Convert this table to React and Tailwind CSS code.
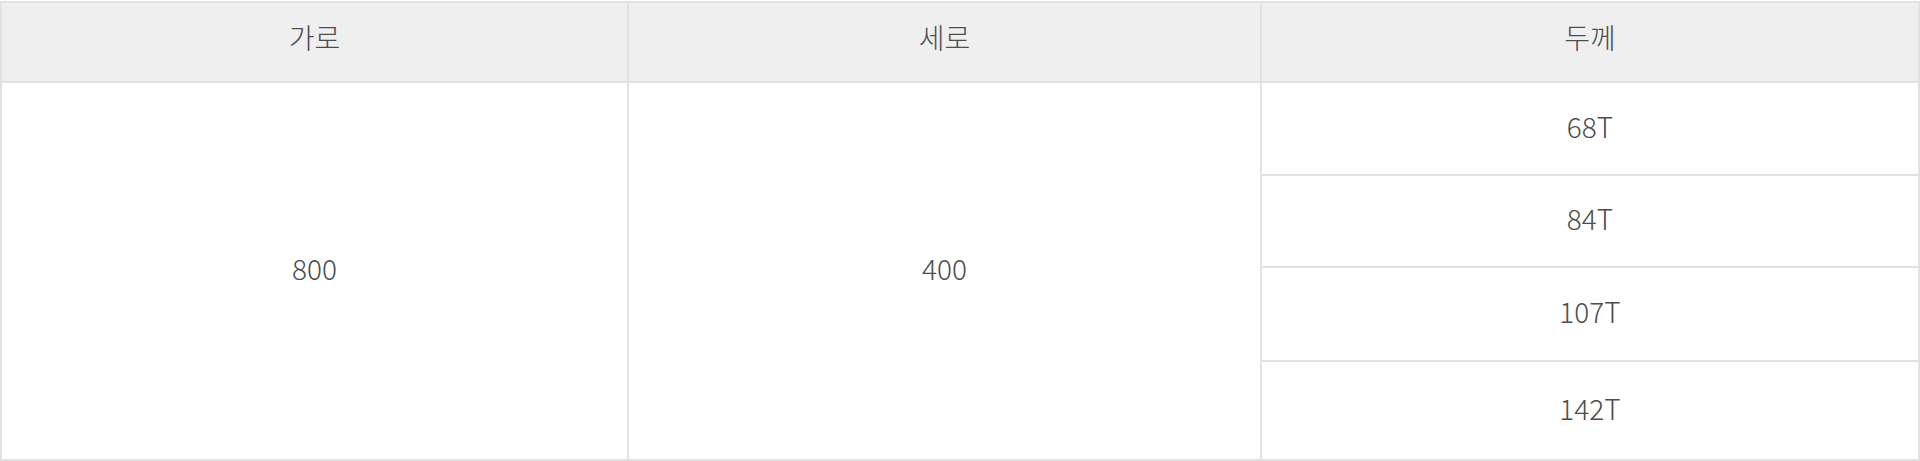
import React from "react";

const thicknesses = ["68T", "84T", "107T", "142T"];

const App = () => {
  return (
    <div
      className="w-[1920px] h-[461px] bg-white pt-px"
      style={{ fontFamily: '"Noto Sans CJK KR", "Noto Sans", sans-serif' }}
    >
      <div className="grid grid-cols-[625px_631px_1fr] grid-rows-[78px_91px_90px_92px_97px] gap-[2px] p-[2px] bg-[#e2e2e2] text-[28px] font-light text-[#4d4d4d]">
        <div className="bg-[#efefef] flex items-center justify-center pb-[10px]">가로</div>
        <div className="bg-[#efefef] flex items-center justify-center pb-[10px]">세로</div>
        <div className="bg-[#efefef] flex items-center justify-center pb-[10px]">두께</div>

        <div className="row-span-4 bg-white flex items-center justify-center pb-[6px]">800</div>
        <div className="row-span-4 bg-white flex items-center justify-center pb-[6px]">400</div>
        {thicknesses.map((t) => (
          <div key={t} className="bg-white flex items-center justify-center pb-[6px]">
            {t}
          </div>
        ))}
      </div>
    </div>
  );
};

export default App;
